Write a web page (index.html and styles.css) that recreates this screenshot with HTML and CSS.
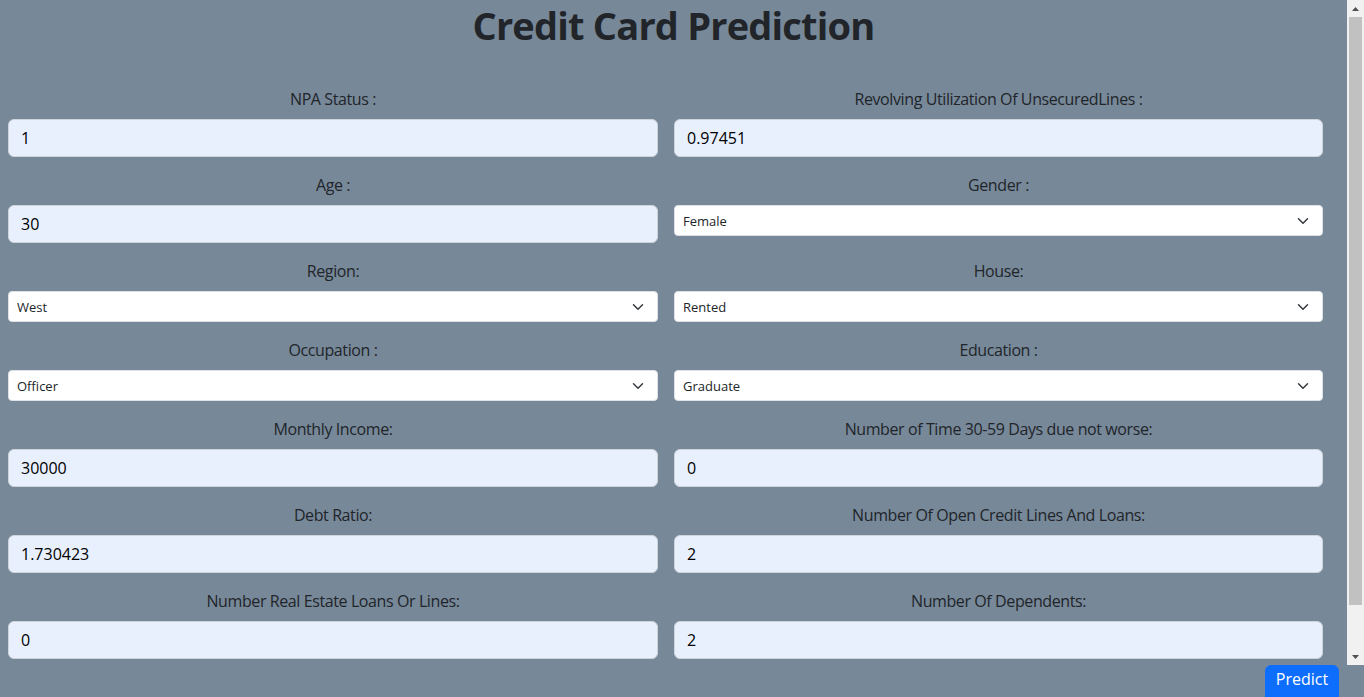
FILE: index.html
```html
<!DOCTYPE html>
<html lang="en">
<head>
<meta charset="utf-8">
<title>Credit Card Prediction</title>
<link rel="stylesheet" href="styles.css">
</head>
<body>
<div class="window">
  <main class="page">
    <h1 class="title">Credit Card Prediction</h1>
    <form class="form-grid">
      <div class="field">
        <label class="label">NPA Status :</label>
        <input class="input" type="text" value="1">
      </div>
      <div class="field">
        <label class="label">Revolving Utilization Of UnsecuredLines :</label>
        <input class="input" type="text" value="0.97451">
      </div>
      <div class="field">
        <label class="label">Age :</label>
        <input class="input" type="text" value="30">
      </div>
      <div class="field">
        <label class="label">Gender :</label>
        <div class="select-wrap">
          <select class="select"><option>Female</option><option>Male</option></select>
          <svg class="chev" width="16" height="12" viewBox="0 0 16 16"><path fill="none" stroke="#343a40" stroke-linecap="round" stroke-linejoin="round" stroke-width="2" d="m2 5 6 6 6-6"/></svg>
        </div>
      </div>
      <div class="field">
        <label class="label">Region:</label>
        <div class="select-wrap">
          <select class="select"><option>West</option><option>East</option></select>
          <svg class="chev" width="16" height="12" viewBox="0 0 16 16"><path fill="none" stroke="#343a40" stroke-linecap="round" stroke-linejoin="round" stroke-width="2" d="m2 5 6 6 6-6"/></svg>
        </div>
      </div>
      <div class="field">
        <label class="label">House:</label>
        <div class="select-wrap">
          <select class="select"><option>Rented</option><option>Owned</option></select>
          <svg class="chev" width="16" height="12" viewBox="0 0 16 16"><path fill="none" stroke="#343a40" stroke-linecap="round" stroke-linejoin="round" stroke-width="2" d="m2 5 6 6 6-6"/></svg>
        </div>
      </div>
      <div class="field">
        <label class="label">Occupation :</label>
        <div class="select-wrap">
          <select class="select"><option>Officer</option><option>Professional</option></select>
          <svg class="chev" width="16" height="12" viewBox="0 0 16 16"><path fill="none" stroke="#343a40" stroke-linecap="round" stroke-linejoin="round" stroke-width="2" d="m2 5 6 6 6-6"/></svg>
        </div>
      </div>
      <div class="field">
        <label class="label">Education :</label>
        <div class="select-wrap">
          <select class="select"><option>Graduate</option><option>Post-Graduate</option></select>
          <svg class="chev" width="16" height="12" viewBox="0 0 16 16"><path fill="none" stroke="#343a40" stroke-linecap="round" stroke-linejoin="round" stroke-width="2" d="m2 5 6 6 6-6"/></svg>
        </div>
      </div>
      <div class="field">
        <label class="label">Monthly Income:</label>
        <input class="input" type="text" value="30000">
      </div>
      <div class="field">
        <label class="label">Number of Time 30-59 Days due not worse:</label>
        <input class="input" type="text" value="0">
      </div>
      <div class="field">
        <label class="label">Debt Ratio:</label>
        <input class="input" type="text" value="1.730423">
      </div>
      <div class="field">
        <label class="label">Number Of Open Credit Lines And Loans:</label>
        <input class="input" type="text" value="2">
      </div>
      <div class="field">
        <label class="label">Number Real Estate Loans Or Lines:</label>
        <input class="input" type="text" value="0">
      </div>
      <div class="field">
        <label class="label">Number Of Dependents:</label>
        <input class="input" type="text" value="2">
      </div>
    </form>
  </main>
  <div class="scrollbar" aria-hidden="true">
    <div class="sb-btn">
      <svg width="7" height="4" viewBox="0 0 7 4"><polygon points="3.5,0 7,4 0,4" fill="#505050"/></svg>
    </div>
    <div class="sb-track">
      <div class="sb-thumb"></div>
    </div>
    <div class="sb-btn">
      <svg width="7" height="4" viewBox="0 0 7 4"><polygon points="0,0 7,0 3.5,4" fill="#505050"/></svg>
    </div>
  </div>
</div>
<div class="actions">
  <button class="btn" type="button">Predict</button>
</div>
</body>
</html>
```

FILE: styles.css
```css
html, body {
  margin: 0;
  padding: 0;
  height: 100%;
  overflow: hidden;
  background: #778899;
  font-family: "Open Sans", "Noto Sans", sans-serif;
  color: #212529;
}

.window {
  display: flex;
  height: 665px;
}

.page {
  flex: 1;
  min-width: 0;
  overflow: hidden;
}

.scrollbar {
  width: 17px;
  display: flex;
  flex-direction: column;
  background: #f1f1f1;
}

.sb-btn {
  height: 17px;
  display: flex;
  align-items: center;
  justify-content: center;
}

.sb-track {
  flex: 1;
  padding: 0 2px 43px;
  display: flex;
  flex-direction: column;
}

.sb-thumb {
  flex: 1;
  background: #c1c1c1;
}

.title {
  margin: 0;
  padding-top: 1px;
  height: 47px;
  text-align: center;
  font-size: 38px;
  line-height: 48px;
  font-weight: 700;
  color: #212529;
  letter-spacing: -0.8px;
}

.form-grid {
  display: grid;
  grid-template-columns: 650px 649px;
  column-gap: 16px;
  row-gap: 16px;
  padding: 39px 0 0 8px;
  margin: 0;
}

.field {
  display: flex;
  flex-direction: column;
}

.label {
  text-align: center;
  font-size: 16px;
  line-height: 24px;
  margin-bottom: 8px;
  color: #212529;
  letter-spacing: -0.4px;
}

.input {
  box-sizing: border-box;
  height: 38px;
  padding: 6px 12px;
  font-family: inherit;
  font-size: 16px;
  color: #000;
  background: #e8f0fe;
  border: 1px solid #ced4da;
  border-radius: 6px;
  outline: none;
}

.select-wrap {
  position: relative;
}

.select {
  -webkit-appearance: none;
  appearance: none;
  box-sizing: border-box;
  width: 100%;
  height: 31px;
  padding: 4px 36px 4px 8px;
  font-family: inherit;
  font-size: 13px;
  color: #212529;
  background: #fff;
  border: 1px solid #dee2e6;
  border-radius: 4px;
  outline: none;
}

.chev {
  position: absolute;
  right: 12px;
  top: 10px;
  pointer-events: none;
}

.actions {
  display: flex;
  justify-content: flex-end;
  padding-right: 25px;
}

.btn {
  box-sizing: border-box;
  height: 38px;
  width: 74px;
  padding: 1px 0 0;
  align-self: flex-start;
  display: flex;
  justify-content: center;
  align-items: flex-start;
  line-height: 24px;
  font-family: inherit;
  font-size: 16px;
  color: #fff;
  background: #0d6efd;
  border: 1px solid #0d6efd;
  border-radius: 6px;
}
```
